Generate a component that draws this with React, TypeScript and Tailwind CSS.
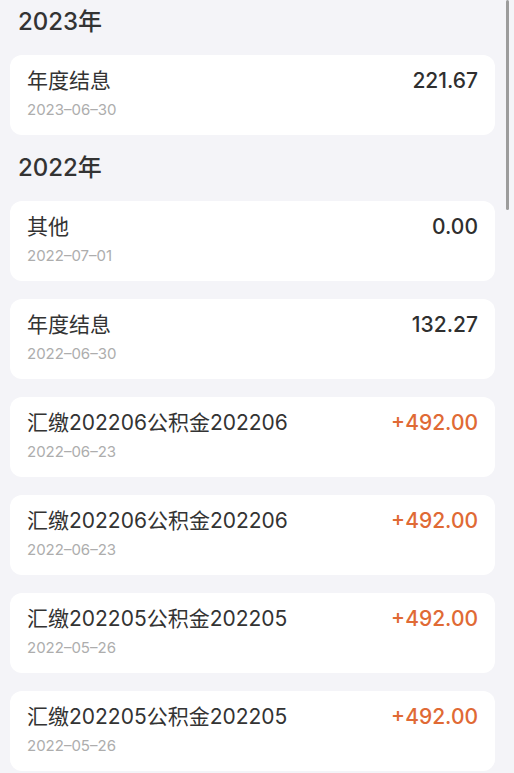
type Record = { title: string; date: string; amount: string; income?: boolean };

const groups: { year: string; records: Record[] }[] = [
  {
    year: "2023年",
    records: [{ title: "年度结息", date: "2023-06-30", amount: "221.67" }],
  },
  {
    year: "2022年",
    records: [
      { title: "其他", date: "2022-07-01", amount: "0.00" },
      { title: "年度结息", date: "2022-06-30", amount: "132.27" },
      { title: "汇缴202206公积金202206", date: "2022-06-23", amount: "+492.00", income: true },
      { title: "汇缴202206公积金202206", date: "2022-06-23", amount: "+492.00", income: true },
      { title: "汇缴202205公积金202205", date: "2022-05-26", amount: "+492.00", income: true },
      { title: "汇缴202205公积金202205", date: "2022-05-26", amount: "+492.00", income: true },
    ],
  },
];

function RecordCard({ record }: { record: Record }) {
  return (
    <div className="flex h-[80px] shrink-0 items-start justify-between rounded-[12px] bg-white px-[17px] pt-[13px]">
      <div className="flex flex-col">
        <span className="text-[21px] leading-[26px] text-[#333333]">{record.title}</span>
        <span className="mt-[7px] text-[15px] leading-[18px] text-[#adadad]">
          {record.date.replace(/-/g, "–")}
        </span>
      </div>
      <span
        className={
          record.income
            ? "text-[21px] font-medium leading-[26px] text-[#e06a35]"
            : "text-[21px] font-medium leading-[26px] text-[#2f2f2f]"
        }
      >
        {record.amount}
      </span>
    </div>
  );
}

export default function App() {
  return (
    <div
      className="relative h-[773px] w-[514px] overflow-hidden bg-[#f4f4f8]"
      style={{ fontFamily: 'Inter, "Noto Sans CJK SC", sans-serif' }}
    >
      <div className="flex flex-col gap-[11px] pl-[10px] pr-[19px]">
        {groups.map((group) => (
          <div key={group.year} className="flex flex-col">
            <h2 className="mb-[11px] flex h-[44px] items-center pl-[8px] text-[24px] font-medium text-[#333333]">
              {group.year}
            </h2>
            <div className="flex flex-col gap-[18px]">
              {group.records.map((record, i) => (
                <RecordCard key={i} record={record} />
              ))}
            </div>
          </div>
        ))}
      </div>
      {/* scrollbar overlay */}
      <div className="absolute right-[5px] top-0 h-[210px] w-[3px] rounded-full bg-[#9c9c9c]" />
    </div>
  );
}
